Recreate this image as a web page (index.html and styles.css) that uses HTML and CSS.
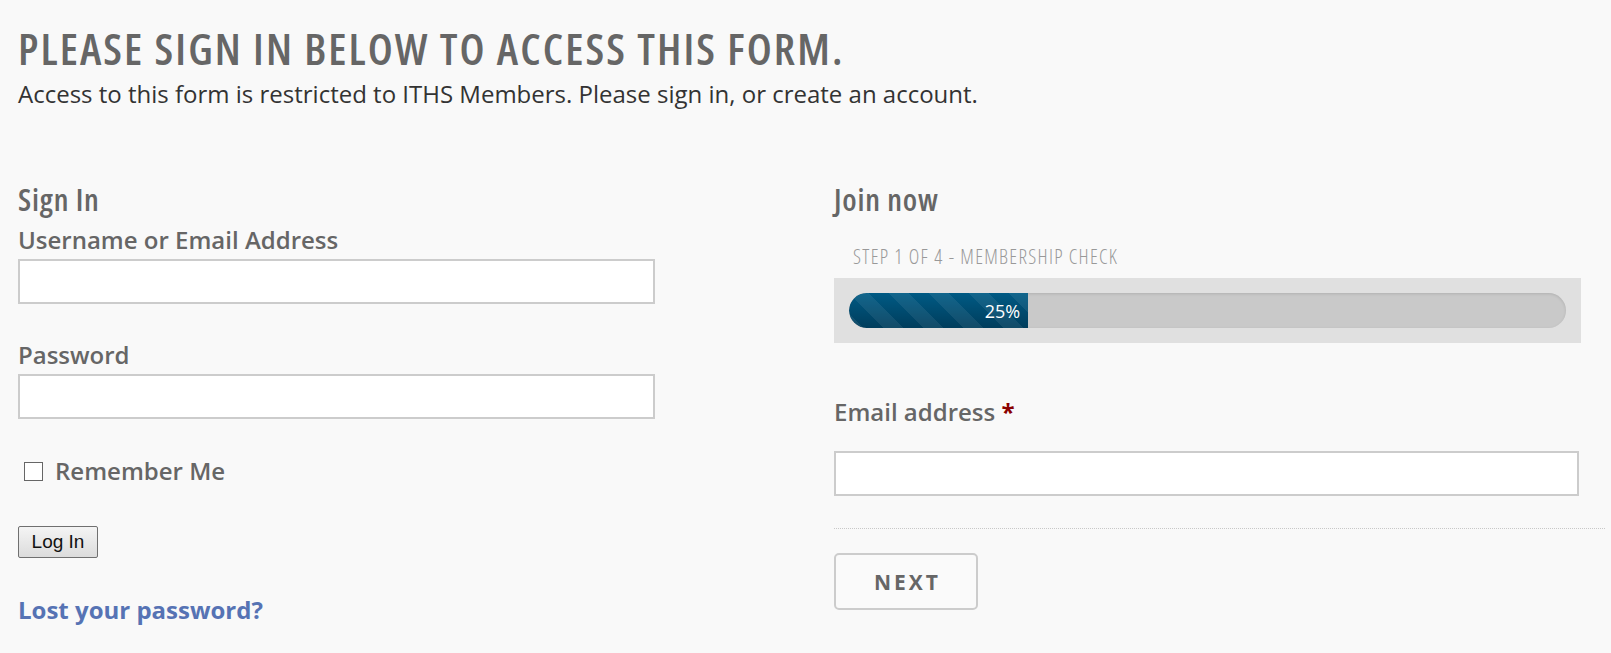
FILE: index.html
```html
<!DOCTYPE html>
<html lang="en">
<head>
<meta charset="utf-8">
<title>Please sign in</title>
<link rel="stylesheet" href="styles.css">
</head>
<body>
<div class="page">
  <h1 class="page-title">PLEASE SIGN IN BELOW TO ACCESS THIS FORM.</h1>
  <p class="intro">Access to this form is restricted to ITHS Members. Please sign in, or create an account.</p>

  <div class="columns">
    <section class="col col-left">
      <h2 class="col-title">Sign In</h2>
      <label class="field-label" for="user">Username or Email Address</label>
      <input class="text-input" id="user" type="text">
      <label class="field-label field-label-gap" for="pass">Password</label>
      <input class="text-input" id="pass" type="password">
      <label class="remember">
        <input class="check" type="checkbox">
        <span>Remember Me</span>
      </label>
      <div class="login-row"><button class="login-btn" type="button">Log In</button></div>
      <a class="lost" href="#">Lost your password?</a>
    </section>

    <section class="col col-right">
      <h2 class="col-title">Join now</h2>
      <div class="step">STEP 1 OF 4 - MEMBERSHIP CHECK</div>
      <div class="progress-wrap">
        <div class="progress-track">
          <div class="progress-fill" style="width:25%"><span>25%</span></div>
        </div>
      </div>
      <label class="field-label email-label" for="email">Email address <span class="req">*</span></label>
      <input class="text-input email-input" id="email" type="email">
      <div class="divider"></div>
      <div class="next-row"><button class="next-btn" type="button">NEXT</button></div>
    </section>
  </div>
</div>
</body>
</html>
```

FILE: styles.css
```css
html, body {
  margin: 0;
  padding: 0;
  background: #f9f9f9;
}
body {
  font-family: "Open Sans", "Liberation Sans", sans-serif;
  color: #333;
}
.page {
  padding: 23px 6px 0 18px;
}
.page-title {
  margin: 0;
  font-size: 44px;
  line-height: 50px;
  font-weight: 600;
  font-stretch: 75%;
  color: #666;
  letter-spacing: 2.1px;
}
.intro {
  margin: 5px 0 0;
  font-size: 24px;
  line-height: 32px;
  color: #333;
}
.columns {
  display: grid;
  grid-template-columns: 637px 1fr;
  column-gap: 179px;
  margin-top: 71px;
}
.col {
  display: flex;
  flex-direction: column;
  align-items: flex-start;
}
.col-title {
  margin: 0;
  font-size: 31px;
  line-height: 36px;
  font-weight: 600;
  font-stretch: 75%;
  letter-spacing: 0.8px;
  color: #666;
}
.field-label {
  display: block;
  margin-top: 7px;
  font-size: 24px;
  line-height: 32px;
  font-weight: 600;
  color: #666;
}
.field-label-gap {
  margin-top: 35px;
}
.text-input {
  box-sizing: border-box;
  margin: 3px 0 0;
  width: 637px;
  height: 45px;
  border: 2px solid #ccc;
  background: #fff;
  padding: 4px 8px;
  font: inherit;
}
.remember {
  display: flex;
  align-items: center;
  margin-top: 36px;
  margin-left: 6px;
  font-size: 24px;
  line-height: 32px;
  font-weight: 600;
  color: #666;
}
.check {
  appearance: none;
  -webkit-appearance: none;
  box-sizing: border-box;
  width: 19px;
  height: 19px;
  margin: 0 12px 0 0;
  border: 1.5px solid #666;
  background: #fff;
}
.login-row {
  margin-top: 39px;
}
.login-btn {
  box-sizing: border-box;
  width: 80px;
  height: 32px;
  padding: 0;
  border: 1px solid #707070;
  border-radius: 2px;
  background: linear-gradient(#f4f4f4, #dcdcdc);
  font-family: "Liberation Sans", Arial, sans-serif;
  font-size: 19px;
  color: #111;
}
.lost {
  margin-top: 36px;
  font-size: 24px;
  line-height: 32px;
  font-weight: 700;
  color: #5673b4;
  text-decoration: none;
}
.col-right {
  align-items: stretch;
}
.step {
  margin-top: 27px;
  margin-left: 19px;
  font-size: 20px;
  line-height: 26px;
  font-weight: 300;
  font-stretch: 75%;
  letter-spacing: 1.3px;
  color: #999;
}
.progress-wrap {
  box-sizing: border-box;
  width: 747px;
  margin-top: 8px;
  padding: 15px;
  background: #e0e0e0;
}
.progress-track {
  height: 35px;
  border-radius: 18px;
  background: #c9c9c9;
  box-shadow: inset 0 1px 3px rgba(0, 0, 0, 0.12);
  overflow: hidden;
}
.progress-fill {
  box-sizing: border-box;
  height: 100%;
  display: flex;
  align-items: center;
  justify-content: flex-end;
  padding-right: 8px;
  border-radius: 18px 0 0 18px;
  background-color: #004f75;
  background-image:
    linear-gradient(45deg, rgba(255,255,255,0.07) 25%, transparent 25%, transparent 50%, rgba(255,255,255,0.07) 50%, rgba(255,255,255,0.07) 75%, transparent 75%, transparent),
    linear-gradient(#005a84, #003d5c);
  background-size: 40px 40px, 100% 100%;
  color: #fff;
  font-size: 18px;
}
.email-label {
  margin-top: 53px;
}
.req {
  color: #8b0000;
  font-weight: 700;
}
.email-input {
  width: 745px;
  margin-top: 23px;
}
.divider {
  margin-top: 32px;
  border-top: 1px dotted #c8c8c8;
}
.next-row {
  margin-top: 24px;
}
.next-btn {
  box-sizing: border-box;
  width: 144px;
  height: 57px;
  padding: 0 0 0 3px;
  border: 2px solid #ccc;
  border-radius: 5px;
  background: #fafafa;
  font-family: "Open Sans", sans-serif;
  font-size: 21px;
  font-weight: 700;
  letter-spacing: 3px;
  color: #666;
}
```
